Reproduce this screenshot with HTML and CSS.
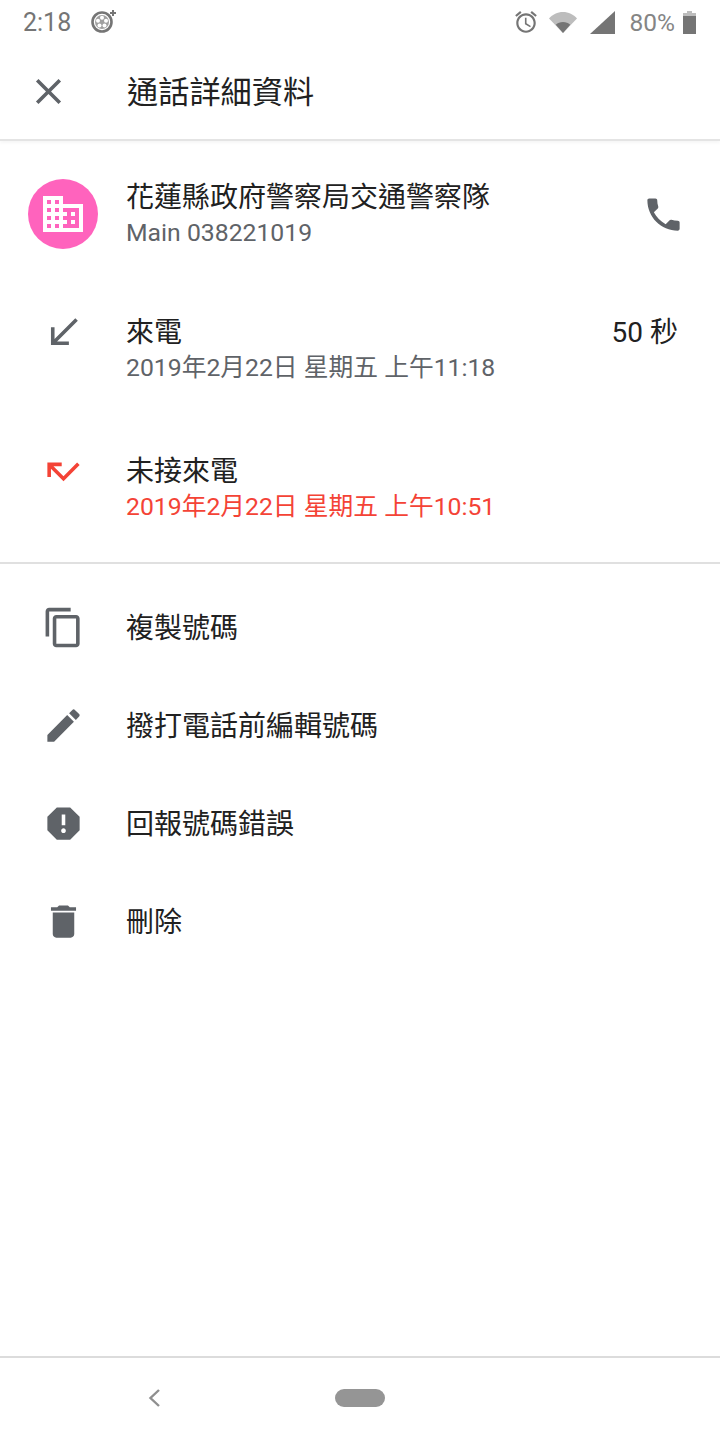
FILE: index.html
```html
<!DOCTYPE html>
<html lang="zh-Hant">
<head>
    <meta charset="UTF-8">
    <meta name="viewport" content="width=device-width, initial-scale=1.0">
    <title>通話詳細資料</title>
    <link rel="stylesheet" href="styles.css">
</head>
<body>
    <div class="screen">
        <div class="status-bar">
            <span class="status-time">2:18</span>
            <svg class="status-wheel" width="28" height="28" viewBox="0 0 28 28">
                <circle cx="12" cy="15" r="9.500" fill="none" stroke="#757575" stroke-width="2.600"/>
                <circle cx="12" cy="15" r="7" fill="#a0a0a0"/>
                <g fill="#fff">
                    <circle cx="12" cy="10.800" r="2"/>
                    <circle cx="16" cy="13.700" r="2"/>
                    <circle cx="14.500" cy="18.400" r="2"/>
                    <circle cx="9.500" cy="18.400" r="2"/>
                    <circle cx="8" cy="13.700" r="2"/>
                </g>
                <path d="M22 3h2v2h2v2h-2v2h-2V7h-2V5h2z" fill="#757575"/>
            </svg>
            <div class="status-right">
                <svg width="26" height="26" viewBox="0 0 24 24" fill="#757575"><path d="M22 5.720l-4.600-3.860-1.290 1.530 4.600 3.860L22 5.720zM7.880 3.390L6.600 1.860 2 5.710l1.290 1.530 4.590-3.850zM12.500 8H11v6l4.750 2.850.75-1.230-4-2.370V8zM12 4c-4.970 0-9 4.030-9 9s4.030 9 9 9 9-4.030 9-9-4.030-9-9-9zm0 16c-3.870 0-7-3.130-7-7s3.130-7 7-7 7 3.130 7 7-3.130 7-7 7z"/></svg>
                <svg class="status-wifi" width="28" height="21" viewBox="0 0 28 21">
                    <path d="M0 6.500C3.500 2.500 8.500 0 14 0s10.500 2.500 14 6.500L14 21z" fill="#bdbdbd"/>
                    <path d="M6.800 12.800C8.600 11 11.200 10 14 10s5.400 1 7.200 2.800L14 21z" fill="#757575"/>
                </svg>
                <svg class="status-signal" width="25" height="23" viewBox="0 0 25 23"><path d="M25 0v23H0z" fill="#757575"/></svg>
                <span class="status-battery-text">80%</span>
                <div class="battery">
                    <div class="battery-cap"></div>
                    <div class="battery-empty"></div>
                    <div class="battery-fill"></div>
                </div>
            </div>
        </div>

        <header class="toolbar">
            <svg class="toolbar-close" width="43" height="43" viewBox="0 0 24 24"><path d="M19 6.410L17.590 5 12 10.590 6.410 5 5 6.410 10.590 12 5 17.590 6.410 19 12 13.410 17.590 19 19 17.590 13.410 12 19 6.410z"/></svg>
            <h1>通話詳細資料</h1>
        </header>

        <section class="details">
            <div class="contact">
                <div class="avatar">
                    <svg width="48" height="48" viewBox="0 0 24 24" fill="#fff"><path d="M12 7V3H2v18h20V7H12zM6 19H4v-2h2v2zm0-4H4v-2h2v2zm0-4H4V9h2v2zm0-4H4V5h2v2zm4 12H8v-2h2v2zm0-4H8v-2h2v2zm0-4H8V9h2v2zm0-4H8V5h2v2zm10 12h-8v-2h2v-2h-2v-2h2v-2h-2V9h8v10zm-2-8h-2v2h2v-2zm0 4h-2v2h2v-2z"/></svg>
                </div>
                <div class="text-block">
                    <div class="primary">花蓮縣政府警察局交通警察隊</div>
                    <div class="secondary">Main 038221019</div>
                </div>
                <svg class="icon call-btn" viewBox="0 0 24 24"><path d="M6.620 10.790c1.440 2.830 3.760 5.140 6.590 6.590l2.200-2.200c.27-.27.67-.36 1.020-.24 1.120.37 2.330.57 3.570.57.55 0 1 .45 1 1V20c0 .55-.45 1-1 1-9.390 0-17-7.610-17-17 0-.55.45-1 1-1h3.500c.55 0 1 .45 1 1 0 1.250.2 2.450.57 3.570.11.35.03.74-.25 1.020l-2.200 2.200z"/></svg>
            </div>

            <div class="call call-in">
                <svg class="icon" viewBox="0 0 24 24"><path d="M20 5.410L18.590 4 7 15.590V9H5v10h10v-2H8.410z"/></svg>
                <div class="text-block">
                    <div class="primary">來電</div>
                    <div class="secondary">2019年2月22日 星期五 上午11:18</div>
                </div>
                <div class="duration">50 秒</div>
            </div>

            <div class="call call-missed">
                <svg class="icon" viewBox="0 0 24 24"><path d="M19.590 7L12 14.590 6.410 9H11V7H3v8h2v-4.590l7 7 9-9z"/></svg>
                <div class="text-block">
                    <div class="primary">未接來電</div>
                    <div class="secondary">2019年2月22日 星期五 上午10:51</div>
                </div>
            </div>
        </section>

        <section class="actions">
            <div class="action">
                <svg class="icon" viewBox="0 0 24 24"><path d="M16 1H4c-1.100 0-2 .9-2 2v14h2V3h12V1zm3 4H8c-1.100 0-2 .9-2 2v14c0 1.100.9 2 2 2h11c1.100 0 2-.9 2-2V7c0-1.100-.9-2-2-2zm0 16H8V7h11v14z"/></svg>
                <span>複製號碼</span>
            </div>
            <div class="action">
                <svg class="icon" viewBox="0 0 24 24"><path d="M3 17.250V21h3.750L17.810 9.940l-3.750-3.750L3 17.250zM20.710 7.040c.39-.39.39-1.020 0-1.410l-2.340-2.340c-.39-.39-1.020-.39-1.410 0l-1.830 1.830 3.750 3.750 1.830-1.830z"/></svg>
                <span>撥打電話前編輯號碼</span>
            </div>
            <div class="action">
                <svg class="icon" viewBox="0 0 24 24"><path d="M15.730 3H8.270L3 8.270v7.460L8.270 21h7.460L21 15.730V8.270L15.730 3zM12 17.300c-.72 0-1.300-.58-1.300-1.300 0-.72.58-1.300 1.300-1.300.72 0 1.300.58 1.300 1.300 0 .72-.58 1.300-1.300 1.300zm1-4.300h-2V7h2v6z"/></svg>
                <span>回報號碼錯誤</span>
            </div>
            <div class="action">
                <svg class="icon" viewBox="0 0 24 24"><path d="M6 19c0 1.100.9 2 2 2h8c1.100 0 2-.9 2-2V7H6v12zM19 4h-3.500l-1-1h-5l-1 1H5v2h14V4z"/></svg>
                <span>刪除</span>
            </div>
        </section>

        <nav class="nav-bar">
            <svg class="nav-back" width="14" height="20" viewBox="0 0 14 20"><path d="M12 2L3.500 10 12 18" fill="none" stroke="#8f8f8f" stroke-width="2.400"/></svg>
            <div class="nav-home"></div>
        </nav>
    </div>
</body>
</html>
```

FILE: styles.css
```css
* {
    box-sizing: border-box;
}
html, body {
    margin: 0;
    padding: 0;
    background-color: #fff;
}
body {
    font-family: Roboto, "Noto Sans CJK TC", sans-serif;
    color: #212121;
}
.screen {
    width: 720px;
    height: 1440px;
    display: flex;
    flex-direction: column;
    overflow: hidden;
}
.status-bar {
    height: 48px;
    display: flex;
    align-items: center;
    padding: 0 24px 4px 23px;
    flex-shrink: 0;
}
.status-time {
    font-size: 25px;
    color: #757575;
}
.status-wheel {
    margin-left: 19px;
    margin-top: -3px;
}
.status-right {
    margin-left: auto;
    display: flex;
    align-items: center;
}
.status-wifi {
    margin-left: 10px;
}
.status-signal {
    margin-left: 13px;
}
.status-battery-text {
    margin-left: 15px;
    font-size: 24.500px;
    color: #858585;
}
.battery {
    margin-left: 8px;
    width: 13px;
    height: 23px;
    display: flex;
    flex-direction: column;
    align-items: center;
}
.battery-cap {
    width: 5px;
    height: 2px;
    background-color: #bdbdbd;
}
.battery-empty {
    width: 13px;
    height: 3px;
    background-color: #bdbdbd;
}
.battery-fill {
    width: 13px;
    flex: 1;
    background-color: #757575;
}
.toolbar {
    height: 93px;
    display: flex;
    align-items: center;
    padding-left: 27px;
    padding-bottom: 4px;
    border-bottom: 2px solid #e4e4e4;
    box-shadow: 0 2px 3px rgba(0, 0, 0, 0.04);
    flex-shrink: 0;
}
.toolbar-close {
    fill: #5f6368;
}
h1 {
    margin: 0 0 5px 57px;
    font-size: 31.200px;
    font-weight: 400;
    color: #212121;
}
.icon {
    width: 43px;
    height: 43px;
    fill: #5f6368;
    flex-shrink: 0;
}
.details {
    padding-top: 38px;
    padding-bottom: 39px;
    border-bottom: 2px solid #e0e0e0;
    display: flex;
    flex-direction: column;
    flex-shrink: 0;
}
.contact {
    display: flex;
    align-items: center;
    padding: 0 35px 0 28px;
    margin-bottom: 65px;
}
.avatar {
    width: 70px;
    height: 70px;
    margin-right: 28px;
    border-radius: 50%;
    background-color: #ff63bd;
    display: flex;
    align-items: center;
    justify-content: center;
    flex-shrink: 0;
}
.text-block {
    flex: 1;
}
.primary {
    font-size: 28px;
    line-height: 38px;
    color: #212121;
}
.secondary {
    font-size: 24.750px;
    line-height: 32px;
    color: #5f6368;
}
.call {
    display: flex;
    align-items: flex-start;
    padding: 0 42px 0 42px;
}
.call .icon {
    margin-right: 41px;
    margin-top: -3px;
}
.call-in {
    margin-bottom: 69px;
}
.call-missed .icon,
.call-missed .secondary {
    fill: #f44336;
    color: #f44336;
}
.duration {
    font-size: 28px;
    line-height: 38px;
}
.actions {
    padding-top: 14px;
    flex: 1;
}
.action {
    height: 98px;
    display: flex;
    align-items: center;
    padding-left: 42px;
    font-size: 28px;
    color: #212121;
}
.action .icon {
    margin-right: 41px;
}
.action span {
    margin-bottom: 2px;
}
.nav-bar {
    height: 84px;
    border-top: 2px solid #dcdcdc;
    display: flex;
    align-items: center;
    padding-left: 147px;
    padding-bottom: 2px;
    flex-shrink: 0;
}
.nav-back {
    margin-right: 174px;
}
.nav-home {
    width: 50px;
    height: 18px;
    border-radius: 9px;
    background-color: #959595;
}
```
